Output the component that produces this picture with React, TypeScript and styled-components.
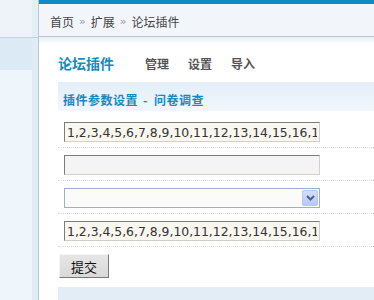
import React from 'react';
import { styled, createGlobalStyle } from 'styled-components';

const GlobalStyle = createGlobalStyle`
  html, body {
    margin: 0;
    padding: 0;
    background: #fff;
  }
  body {
    font-family: "DejaVu Sans", "Noto Sans CJK SC", sans-serif;
    font-size: 12px;
    color: #333;
  }
`;

const Page = styled.div`
  display: flex;
  height: 300px;
  overflow: hidden;
`;

const Sidebar = styled.aside`
  flex: 0 0 38px;
  display: flex;
  flex-direction: column;
  border-right: 1px solid #b3c8d8;
  background: linear-gradient(to right, #eef6fb 32px, #e1edf6 32px);
`;

const SideHead = styled.div`
  height: 37px;
  border-bottom: 1px solid #c3cfd9;
  background: linear-gradient(to right, #edf3f9 32px, #e5edf5 32px);
`;

const SideItem = styled.div<{ $active?: boolean }>`
  width: 32px;
  height: 32px;
  background: ${({ $active }) => ($active ? '#dbeaf5' : 'transparent')};
`;

const Main = styled.main`
  flex: 1;
  min-width: 0;
  display: flex;
  flex-direction: column;
`;

const TopStripe = styled.div`
  height: 4px;
  background: #0f8bc3;
`;

const Crumbs = styled.nav`
  height: 33px;
  box-sizing: border-box;
  padding: 3px 0 0 11px;
  display: flex;
  align-items: center;
  gap: 5px;
  background: #f2f6fa;
  border-bottom: 1px solid #b5c7d5;
  font-family: "Noto Sans CJK SC", sans-serif;
  font-size: 12px;
  color: #444;
`;

const Sep = styled.span`
  color: #999;
  font-family: "DejaVu Sans", sans-serif;
  font-size: 11px;
`;

const Content = styled.div`
  flex: 1;
  padding-left: 19px;
  display: flex;
  flex-direction: column;
  background: linear-gradient(#e9eff4, #fff 7px) no-repeat;
`;

const TitleRow = styled.div`
  display: flex;
  align-items: center;
  height: 20px;
  margin-top: 16px;
  font-family: "Noto Sans CJK SC", sans-serif;
`;

const Title = styled.h2`
  margin: 0 31px 0 0;
  font-size: 14px;
  font-weight: bold;
  color: #1789be;
`;

const Tabs = styled.div`
  display: flex;
  gap: 19px;
`;

const Tab = styled.a`
  font-size: 12px;
  font-weight: bold;
  color: #555;
  text-decoration: none;
`;

const SectionBar = styled.h3`
  margin: 9px 0 0;
  height: 29px;
  box-sizing: border-box;
  padding: 5px 0 0 5px;
  display: flex;
  align-items: center;
  background: linear-gradient(#e3eef8, #f2f7fc);
  font-family: "Noto Sans CJK SC", sans-serif;
  font-size: 12px;
  font-weight: bold;
  letter-spacing: 0.5px;
  color: #1789be;
`;

const Dash = styled.span`
  margin: 0 6px 0 5px;
`;

const Form = styled.form`
  margin-top: 4px;
  display: flex;
  flex-direction: column;
`;

const Row = styled.div`
  padding: 7px 0 5px 6px;
  border-bottom: 1px dotted #d8d8d8;
`;

const TextInput = styled.input<{ $filled?: boolean }>`
  display: block;
  width: 256px;
  height: 20px;
  box-sizing: border-box;
  margin: 0;
  padding: 0 2px;
  border: 1px solid;
  border-color: #7c7c7c #d3d0c8 #d3d0c8 #7c7c7c;
  background: ${({ $filled }) => ($filled ? '#faf7f1' : '#f4f4f4')};
  font-family: "DejaVu Sans", sans-serif;
  font-size: 12.4px;
  color: #333;
  outline: none;
`;

const SelectWrap = styled.div`
  position: relative;
  width: 256px;
  height: 20px;
`;

const Select = styled.select`
  display: block;
  width: 100%;
  height: 100%;
  margin: 0;
  border: 1px solid #9db0c8;
  background: #fbfbf9;
  appearance: none;
  outline: none;
`;

const Arrow = styled.span`
  position: absolute;
  top: 2px;
  right: 2px;
  width: 16px;
  height: 16px;
  box-sizing: border-box;
  border: 1px solid #b6c7ec;
  border-radius: 2px;
  background: linear-gradient(#d3defa, #b8c9f2);
  display: flex;
  align-items: center;
  justify-content: center;
  pointer-events: none;
`;

const Submit = styled.button`
  align-self: flex-start;
  margin: 7px 0 0 1px;
  width: 50px;
  height: 24px;
  padding: 0;
  border: 1px solid;
  border-color: #f4f4f4 #7a7a7a #7a7a7a #f4f4f4;
  background: linear-gradient(#e6e6e6, #d9d9d9);
  font-family: "Noto Sans CJK SC", sans-serif;
  font-size: 13px;
  color: #111;
`;

const Footer = styled.div`
  margin-top: 9px;
  flex: 1;
  background: #e3edf5;
`;

const numbers = '1,2,3,4,5,6,7,8,9,10,11,12,13,14,15,16,17,18,19,20';

export default function App() {
  return (
    <>
      <GlobalStyle />
      <Page>
        <Sidebar>
          <SideHead />
          <SideItem $active />
          <SideItem />
        </Sidebar>
        <Main>
          <TopStripe />
          <Crumbs>
            <span>首页</span>
            <Sep>»</Sep>
            <span>扩展</span>
            <Sep>»</Sep>
            <span>论坛插件</span>
          </Crumbs>
          <Content>
            <TitleRow>
              <Title>论坛插件</Title>
              <Tabs>
                <Tab href="#">管理</Tab>
                <Tab href="#">设置</Tab>
                <Tab href="#">导入</Tab>
              </Tabs>
            </TitleRow>
            <SectionBar>
              插件参数设置<Dash>-</Dash>问卷调查
            </SectionBar>
            <Form onSubmit={(e) => e.preventDefault()}>
              <Row>
                <TextInput $filled defaultValue={numbers} />
              </Row>
              <Row>
                <TextInput />
              </Row>
              <Row>
                <SelectWrap>
                  <Select defaultValue="">
                    <option value=""></option>
                  </Select>
                  <Arrow>
                    <svg width="9" height="6" viewBox="0 0 9 6">
                      <path d="M1 1 L4.5 4.5 L8 1" fill="none" stroke="#4d6185" strokeWidth="2" />
                    </svg>
                  </Arrow>
                </SelectWrap>
              </Row>
              <Row>
                <TextInput $filled defaultValue={numbers} />
              </Row>
              <Submit type="submit">提交</Submit>
            </Form>
            <Footer />
          </Content>
        </Main>
      </Page>
    </>
  );
}
